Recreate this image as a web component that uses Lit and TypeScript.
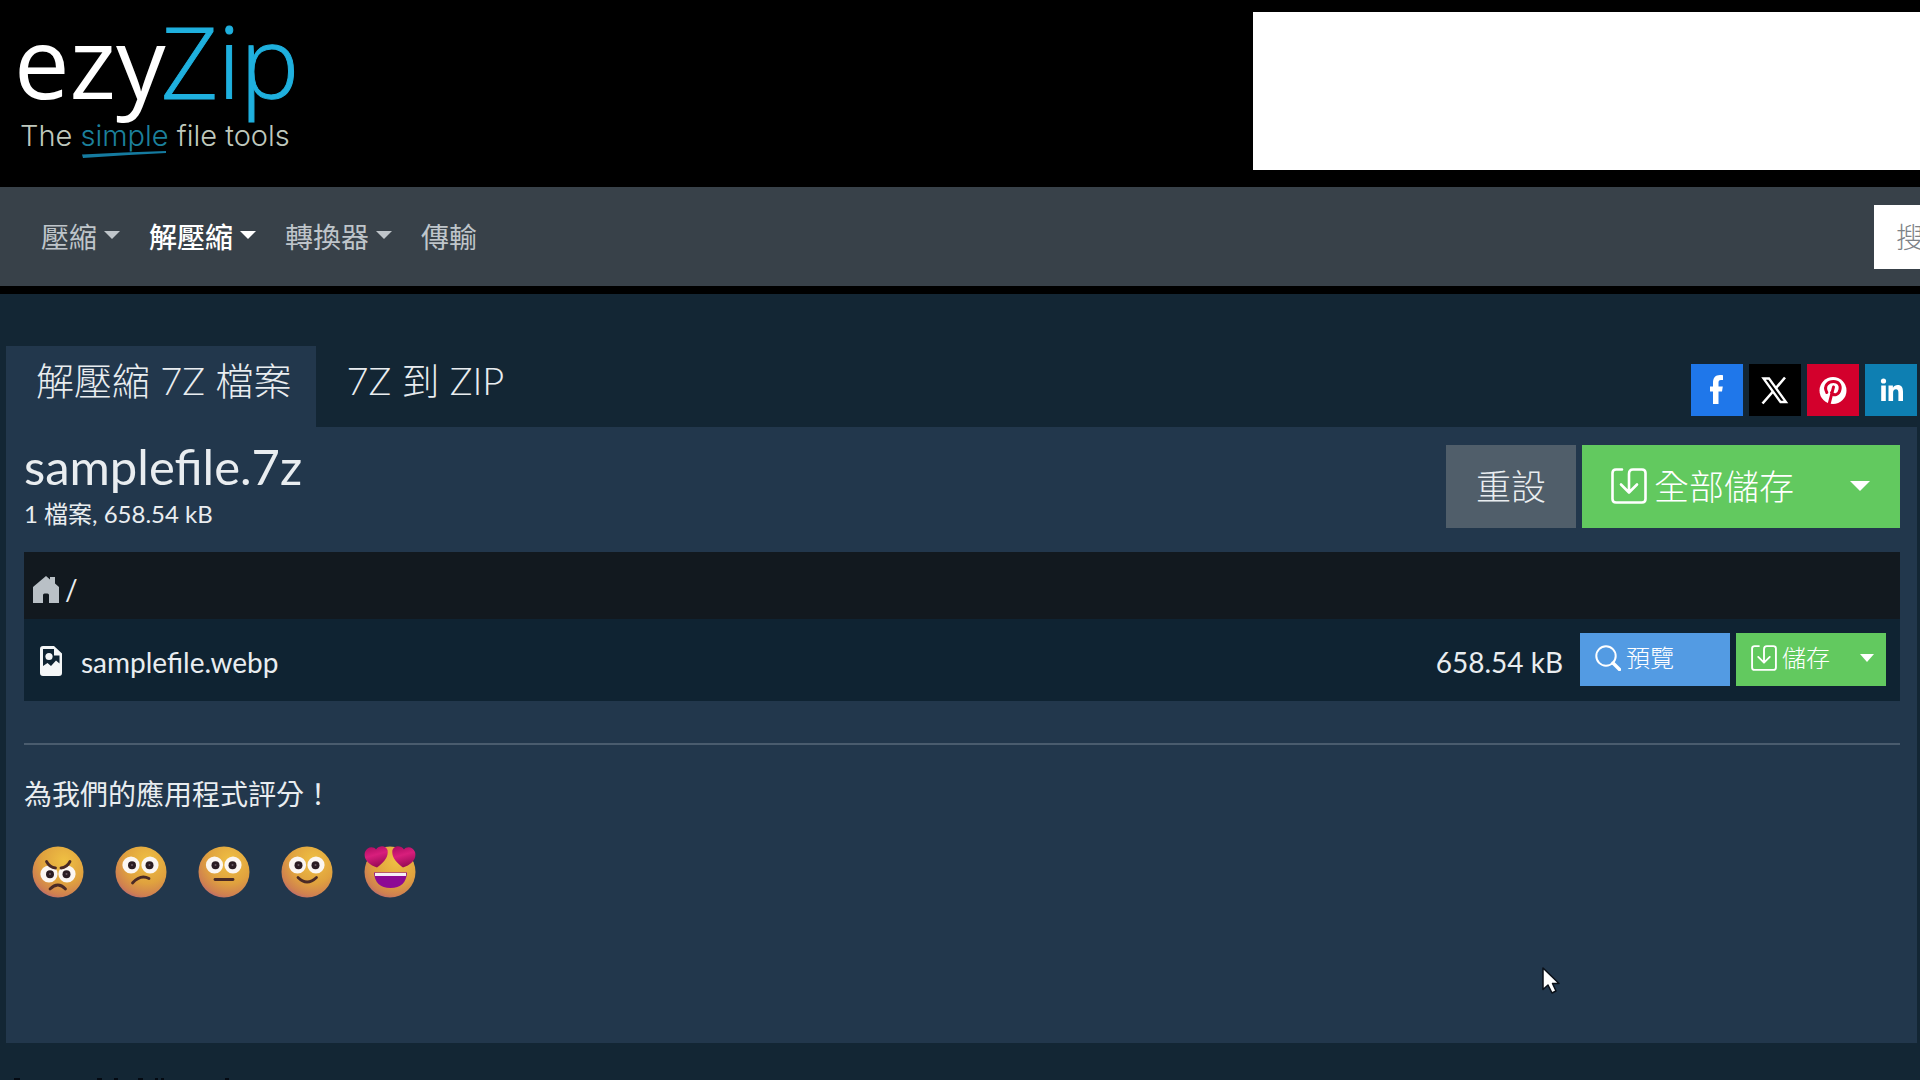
import { LitElement, html, css, svg } from "lit";
import { customElement, property } from "lit/decorators.js";

type Mood = "angry" | "sad" | "neutral" | "happy" | "love";

@customElement("mood-face")
class MoodFace extends LitElement {
  @property() mood: Mood = "neutral";

  static styles = css`
    :host { display: block; }
    .face { display: block; width: 52px; height: 52px; }
  `;

  private eyes(x1: number, x2: number, y: number) {
    return svg`
      <circle cx=${x1} cy=${y} r="8.6" fill="#fbf6f2"/>
      <circle cx=${x2} cy=${y} r="8.6" fill="#fbf6f2"/>
      <circle cx=${x1 + 1} cy=${y + 0.3} r="4" fill="#2b1c22"/>
      <circle cx=${x2 - 0.5} cy=${y + 0.3} r="4" fill="#2b1c22"/>
      <circle cx=${x1 + 1} cy=${y} r="1" fill="#6b5a62"/>
      <circle cx=${x2 - 0.5} cy=${y} r="1" fill="#6b5a62"/>`;
  }

  private features() {
    switch (this.mood) {
      case "angry":
        return svg`${this.eyes(17, 35, 28)}
          <path d="M14.500 15.500q3 6 9 6.500M38 15.500q-3 6-9 6.500" class="line"/>
          <path d="M18 43q8-8 15.500 0" class="line"/>`;
      case "sad":
        return svg`${this.eyes(16, 35, 19)}
          <path d="M17.500 37q8-9 16.500-4.500" class="line"/>`;
      case "neutral":
        return svg`${this.eyes(16.5, 35, 19)}
          <path d="M17 33.500h18" class="line"/>`;
      case "happy":
        return svg`${this.eyes(16.5, 35, 19)}
          <path d="M17 31.500q9 9 18.500 0" class="line"/>`;
      default:
        return svg`
          <path d="M10 26.500h33q-1 15.500-16.500 15.500T10 26.500z" fill="#8d0a94"/>
          <path d="M11 27h31v3H11z" fill="#f6eef6"/>
          <path d="M13 21.500C5 19-1 13 1 6 3 0 10 0 12 3.500 15-1 22-1 23.500 4 25 11 19 17 13 21.500z" fill="url(#heart)"/>
          <path d="M39 21.500C47 19 53 13 51 6 49 0 42 0 40 3.500 37-1 30-1 28.500 4 27 11 33 17 39 21.500z" fill="url(#heart)"/>`;
    }
  }

  render() {
    return html`<svg class="face" viewBox="0 0 52 52" aria-hidden="true">
      <defs>
        <radialGradient id="skin" cx="0.62" cy="0.28" r="0.8">
          <stop offset="0" stop-color="#efc043"/>
          <stop offset="0.55" stop-color="#e0a23e"/>
          <stop offset="0.85" stop-color="#cf8050"/>
          <stop offset="1" stop-color="#b56478"/>
        </radialGradient>
        <linearGradient id="heart" x1="0" y1="0" x2="0.3" y2="1">
          <stop offset="0" stop-color="#a80a5e"/>
          <stop offset="0.5" stop-color="#d81e7c"/>
          <stop offset="1" stop-color="#9c0c58"/>
        </linearGradient>
      </defs>
      <style>.line { fill: none; stroke: #4a2a26; stroke-width: 2.8; stroke-linecap: round; }</style>
      <circle cx="26" cy="26" r="25.500" fill="url(#skin)"/>
      ${this.features()}
    </svg>`;
  }
}

const saveIcon = html`<svg class="icon" viewBox="0 0 36 36" fill="none" stroke="currentColor" stroke-width="2.600" stroke-linecap="round" stroke-linejoin="round" aria-hidden="true">
  <path d="M11 1.500H5Q1.500 1.500 1.500 5v26q0 3.500 3.500 3.500h26q3.500 0 3.500-3.500V5q0-3.500-3.500-3.500H22Q18 1.500 18 6v18M10 16.500l8 8 8-8"/>
</svg>`;

const searchIcon = html`<svg class="icon" viewBox="0 0 26 26" fill="none" stroke="currentColor" aria-hidden="true">
  <circle cx="11" cy="11" r="9.700" stroke-width="2"/>
  <path d="M18 18l6.500 6.500" stroke-width="3.400" stroke-linecap="round"/>
</svg>`;

const socials = [
  { name: "Facebook", cls: "facebook", icon: svg`<path fill="#fff" d="M22 40V27.500H19v-5h3v-3.800c0-5 2.500-7.700 7-7.700 1.200 0 2.300.1 3 .300v4.800h-2c-2 0-2.500 1-2.500 2.600v3.800h4.300l-.8 5H27.500V40z"/>` },
  { name: "X", cls: "x", icon: svg`<path fill="none" stroke="#fff" stroke-width="2.300" d="M14.500 14.500h5.500l17 23.500h-5.500z"/><path stroke="#fff" stroke-width="2.600" d="M36 13.500L27 24M24 27.500L13.500 39.500"/>` },
  { name: "Pinterest", cls: "pinterest", icon: svg`<circle cx="26" cy="26.500" r="13.500" fill="#fff"/><path fill="none" stroke="#d3002c" stroke-width="3" stroke-linecap="round" d="M19.800 28.500C16 21 22 17.500 26.500 17.500c5 0 7.500 3.500 6.500 8-1 5.500-6.500 7-8.500 3M26.500 23L22 40.500"/>` },
  { name: "LinkedIn", cls: "linkedin", icon: svg`<circle cx="18.500" cy="17" r="2.600" fill="#fff"/><path fill="#fff" d="M16.200 21.500h4.600V37h-4.600zM23.500 21.500h4.400v2.200c1-1.700 2.700-2.600 4.700-2.600 4 0 5.400 2.500 5.400 6.600V37h-4.600v-8.300c0-2.200-.6-3.500-2.400-3.500-2 0-2.900 1.400-2.900 3.500V37h-4.600z"/>` },
];

const moods: { mood: Mood; label: string }[] = [
  { mood: "angry", label: "1" },
  { mood: "sad", label: "2" },
  { mood: "neutral", label: "3" },
  { mood: "happy", label: "4" },
  { mood: "love", label: "5" },
];

@customElement("app-root")
class AppRoot extends LitElement {
  static styles = css`
    * { box-sizing: border-box; }
    :host {
      display: flex;
      flex-direction: column;
      position: relative;
      min-height: 100vh;
      overflow: hidden;
      background: #132634;
      color: #e9edf0;
      font-family: Lato, "Noto Sans CJK TC", sans-serif;
      font-size: 28px;
      line-height: 40px;
    }
    a { color: inherit; text-decoration: none; }
    button { border: 0; margin: 0; padding: 0; color: inherit; font: inherit; background: none; text-align: left; }
    .icon { display: block; flex: none; }
    .caret { display: block; flex: none; width: 0; height: 0; border: 8px solid transparent; border-top-color: currentColor; border-bottom: 0; }

    .top { display: flex; justify-content: space-between; height: 187px; padding: 12px 0 17px 19px; background: #000; }
    .logo { display: block; width: 290px; height: 158px; overflow: visible; }
    .logo-name { font-family: "Open Sans", sans-serif; font-size: 99px; }
    .logo-zip { font-weight: 300; }
    .logo-tag { font-family: Inter, sans-serif; font-weight: 300; font-size: 29px; }
    .ad { width: 667px; background: #fff; }

    .nav { display: flex; align-items: center; height: 107px; padding-left: 41px; border-bottom: 8px solid #000; background: #384149; overflow: hidden; }
    .menu { display: flex; gap: 29px; margin: 0; padding: 0; list-style: none; color: #bfc5ca; }
    .menu-link { display: flex; align-items: center; gap: 7px; }
    .menu-link .caret { margin-bottom: 4px; }
    .menu-link.current { color: #fff; font-weight: 500; }
    .search { flex: none; margin: 0 -194px 0 auto; }
    .search-box { display: block; width: 240px; height: 64px; padding: 0 22px; border: 0; border-radius: 0; background: #fff; font: inherit; font-weight: 300; color: #333; }
    .search-box::placeholder { color: #7d8287; opacity: 1; }

    .main { padding: 52px 3px 0 6px; }
    .tab-row { display: flex; justify-content: space-between; align-items: flex-end; }
    .tabs { display: flex; }
    .tab { height: 81px; padding: 6px 25px 0 30px; font-size: 38px; font-weight: 300; line-height: 56px; }
    .tab.active { background: #22374c; }
    .socials { display: flex; gap: 6px; padding: 0 0 11px; }
    .social { display: block; width: 52px; height: 52px; }
    .social svg { display: block; width: 52px; height: 52px; }
    .facebook { background: #1f77ea; }
    .x { background: #000; }
    .pinterest { background: #d3002c; }
    .linkedin { background: #0e7fb2; }

    .panel { height: 616px; padding: 18px 17px 0 18px; background: #22374c; }
    .panel-head { display: flex; justify-content: space-between; height: 83px; }
    .title { margin: 0; font-size: 49px; font-weight: 400; line-height: 43px; }
    .meta { margin: 10px 0 0; font-size: 24px; line-height: 32px; }
    .actions { display: flex; gap: 6px; font-size: 35px; font-weight: 300; }
    .reset { height: 83px; padding: 0 30px 2px; background: #505e6a; }
    .save { display: flex; justify-content: space-between; align-items: center; background: #62c95f; color: #fff; }
    .save-all { width: 318px; height: 83px; padding: 0 30px 2px 29px; }
    .save-all .icon { width: 36px; height: 36px; }
    .save-all .caret { border-width: 10px 10px 0; }
    .with-icon { display: flex; align-items: center; gap: 7px; }

    .files { width: 100%; margin-top: 24px; border-collapse: collapse; }
    .files th, .files td { padding: 0; font-weight: 400; text-align: left; }
    .path { background: #12191f; }
    .path-cell { display: flex; align-items: center; gap: 6px; height: 67px; padding: 6px 9px 0; }
    .home { width: 26px; height: 28px; }
    .file { background: #0f2332; }
    .file-name { display: flex; align-items: center; gap: 18px; height: 82px; padding: 4px 15px 0; }
    .file-icon { width: 24px; height: 30px; margin-bottom: 2px; }
    .file-cell { display: flex; align-items: center; justify-content: flex-end; gap: 6px; height: 82px; padding: 0 14px 2px 0; }
    .size { padding: 6px 11px 0 0; }
    .preview, .save-one { display: flex; align-items: center; width: 150px; height: 53px; padding: 0 12px 2px 15px; font-size: 24px; font-weight: 300; color: #fff; }
    .preview { gap: 5px; background: #539be3; }
    .preview .icon, .save-one .icon { width: 26px; height: 26px; }
    .save-one .with-icon { gap: 5px; }
    .save-one .caret { border-width: 8px 7px 0; }
    .rule { height: 2px; margin: 42px 0 29px; border: 0; background: #4a5c6e; }
    .rate { margin: 0; }
    .moods { display: flex; gap: 31px; padding: 32px 8px 0; }
    .edge { display: block; width: 240px; height: 2px; margin-top: 35px; }
    .cursor { position: absolute; left: 1541px; top: 966px; width: 22px; height: 30px; }
  `;

  render() {
    return html`
      <header class="top">
        <a href="#" aria-label="ezyZip">
          <svg class="logo" viewBox="0 0 290 158">
            <text class="logo-name" x="-5" y="87" fill="#fff">ezy</text>
            <text class="logo-name logo-zip" x="142" y="87" fill="#1fb0de" stroke="#1fb0de">Zip</text>
            <text class="logo-tag" x="1" y="134" fill="#bfc8bd">The <tspan fill="#1c809c">simple</tspan> file tools</text>
            <path d="M63 142.500Q105 140 147 139v2Q105 143 64 146z" fill="#157ba0"/>
          </svg>
        </a>
        <div class="ad"></div>
      </header>

      <nav class="nav">
        <ul class="menu">
          <li><a class="menu-link" href="#">壓縮<span class="caret"></span></a></li>
          <li><a class="menu-link current" href="#">解壓縮<span class="caret"></span></a></li>
          <li><a class="menu-link" href="#">轉換器<span class="caret"></span></a></li>
          <li><a class="menu-link" href="#">傳輸</a></li>
        </ul>
        <form class="search">
          <input class="search-box" type="search" placeholder="搜" aria-label="搜" />
        </form>
      </nav>

      <main class="main">
        <div class="tab-row">
          <nav class="tabs">
            <a class="tab active" href="#">解壓縮 7Z 檔案</a>
            <a class="tab" href="#">7Z 到 ZIP</a>
          </nav>
          <div class="socials">
            ${socials.map((s) => html`<a class="social ${s.cls}" href="#" aria-label=${s.name}><svg viewBox="0 0 52 52">${s.icon}</svg></a>`)}
          </div>
        </div>

        <section class="panel">
          <div class="panel-head">
            <div>
              <h1 class="title">samplefile.7z</h1>
              <p class="meta">1 檔案, 658.54 kB</p>
            </div>
            <div class="actions">
              <button class="reset">重設</button>
              <button class="save save-all"><span class="with-icon">${saveIcon}全部儲存</span><span class="caret"></span></button>
            </div>
          </div>

          <table class="files">
            <thead>
              <tr class="path">
                <th colspan="2">
                  <div class="path-cell">
                    <a href="#" aria-label="/"><svg class="home icon" viewBox="0 0 26 28">
                      <path fill="#b9c0c6" d="M0 12L13 1l4 3.500V2h5v6.500L26 12v16H16v-8q0-1.500-1.500-1.500h-3Q10 18.500 10 20v8H0z"/>
                    </svg></a>
                    <span>/</span>
                  </div>
                </th>
              </tr>
            </thead>
            <tbody>
              <tr class="file">
                <td>
                  <div class="file-name">
                    <svg class="file-icon icon" viewBox="0 0 24 30" aria-hidden="true">
                      <path fill="#f4f6f7" fill-rule="evenodd" d="M4 0h11l8 7.500V27q0 3-3 3H4q-3 0-3-3V3q0-3 3-3zm0 3v17l4.500-3 3.500 3 5-5.500 3.500 3V9.500H15V3z"/>
                      <circle cx="10" cy="10.500" r="3.600" fill="#f4f6f7"/>
                    </svg>
                    <span>samplefile.webp</span>
                  </div>
                </td>
                <td>
                  <div class="file-cell">
                    <span class="size">658.54 kB</span>
                    <button class="preview">${searchIcon}預覽</button>
                    <button class="save save-one"><span class="with-icon">${saveIcon}儲存</span><span class="caret"></span></button>
                  </div>
                </td>
              </tr>
            </tbody>
          </table>

          <hr class="rule" />
          <p class="rate">為我們的應用程式評分！</p>
          <div class="moods">
            ${moods.map((m) => html`<button aria-label=${m.label}><mood-face .mood=${m.mood}></mood-face></button>`)}
          </div>
        </section>

        <svg class="edge" viewBox="0 0 240 2" aria-hidden="true">
          <path d="M8 1h6M91 1h5M108 1h4M132 1h5M149 1h3M155 1h3M219 1h4" stroke="#040a12" stroke-width="2"/>
        </svg>
      </main>

      <svg class="cursor" viewBox="0 0 22 30" aria-hidden="true">
        <path d="M2 2v21.500l5-4.500 4 8 4-2-3.500-7.500H18z" fill="#fff" stroke="#0a1018" stroke-width="1.500" stroke-linejoin="round"/>
      </svg>
    `;
  }
}
